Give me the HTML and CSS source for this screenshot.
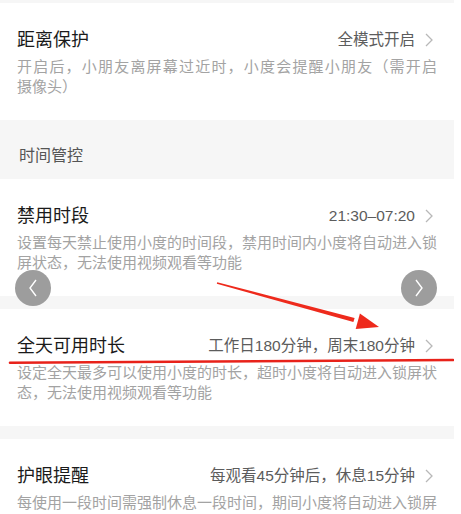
FILE: index.html
```html
<!DOCTYPE html>
<html lang="zh-CN">
<head>
    <meta charset="UTF-8">
    <meta name="viewport" content="width=device-width, initial-scale=1.0">
    <title>设置</title>
    <link rel="stylesheet" href="styles.css">
</head>
<body>
    <div class="page">
        <div class="gap top-gap"></div>

        <div class="card">
            <div class="row">
                <span class="title">距离保护</span>
                <span class="value">全模式开启<svg class="chevron" viewBox="0 0 8 14"><polyline points="1,1 7,7 1,13"/></svg></span>
            </div>
            <p class="desc">开启后，小朋友离屏幕过近时，小度会提醒小朋友（需开启<span class="keep">摄像头）</span></p>
        </div>

        <div class="section-head">时间管控</div>

        <div class="card">
            <div class="row">
                <span class="title">禁用时段</span>
                <span class="value">21:30–07:20<svg class="chevron" viewBox="0 0 8 14"><polyline points="1,1 7,7 1,13"/></svg></span>
            </div>
            <p class="desc">设置每天禁止使用小度的时间段，禁用时间内小度将自动进入锁屏状态，无法使用视频观看等功能</p>
        </div>

        <div class="gap"></div>

        <div class="card">
            <div class="row">
                <span class="title">全天可用时长</span>
                <span class="value">工作日180分钟，周末180分钟<svg class="chevron" viewBox="0 0 8 14"><polyline points="1,1 7,7 1,13"/></svg></span>
            </div>
            <p class="desc">设定全天最多可以使用小度的时长，超时小度将自动进入锁屏状态，无法使用视频观看等功能</p>
        </div>

        <div class="gap"></div>

        <div class="card">
            <div class="row">
                <span class="title">护眼提醒</span>
                <span class="value">每观看45分钟后，休息15分钟<svg class="chevron" viewBox="0 0 8 14"><polyline points="1,1 7,7 1,13"/></svg></span>
            </div>
            <p class="desc">每使用一段时间需强制休息一段时间，期间小度将自动进入锁屏</p>
        </div>

        <!-- carousel paging buttons -->
        <button class="pager pager-prev"><svg viewBox="0 0 10 18"><polyline points="8,1 2,9 8,17"/></svg></button>
        <button class="pager pager-next"><svg viewBox="0 0 10 18"><polyline points="2,1 8,9 2,17"/></svg></button>

        <!-- red markup drawn on top -->
        <svg class="markup" viewBox="0 0 461 514">
            <polygon points="216.8,283.8 217.2,282.2 354.6,317.9 353.4,322.1" />
            <polygon points="379,327 359.9,313.5 355.7,328.9" />
            <line x1="10" y1="362.8" x2="453" y2="360" />
        </svg>
    </div>
</body>
</html>
```

FILE: styles.css
```css
body {
    margin: 0;
    background-color: #ffffff;
    font-family: "Liberation Sans", "Noto Sans CJK SC", sans-serif;
    color: #1c1c1c;
}

.page {
    position: relative;
    width: 454px;
    height: 514px;
    overflow: hidden;
}

.gap {
    height: 13px;
    background-color: #f6f6f6;
}

.top-gap {
    height: 3px;
}

.card {
    background-color: #ffffff;
    padding: 24px 17px 23px 17px;
}

.row {
    display: flex;
    justify-content: space-between;
    align-items: center;
    height: 26px;
}

.title {
    font-size: 18px;
    line-height: 26px;
    color: #1a1a1a;
}

.value {
    display: flex;
    align-items: center;
    font-size: 15.5px;
    line-height: 26px;
    color: #5c5c5c;
}

.chevron {
    width: 8px;
    height: 14px;
    margin-left: 10px;
    margin-right: 4px;
    fill: none;
    stroke: #b8b8b8;
    stroke-width: 1.3;
}

.desc {
    margin: 4px 0 0 0;
    font-size: 15px;
    line-height: 20px;
    color: #a3a3a3;
    text-align: justify;
}

.keep {
    white-space: nowrap;
}

.section-head {
    height: 59px;
    box-sizing: border-box;
    padding: 24px 0 0 19px;
    background-color: #f6f6f6;
    font-size: 16px;
    line-height: 24px;
    color: #555555;
}

.pager {
    position: absolute;
    top: 270px;
    width: 36px;
    height: 36px;
    padding: 0;
    border: none;
    border-radius: 50%;
    background-color: #9d9d9d;
    display: flex;
    justify-content: center;
    align-items: center;
}

.pager svg {
    width: 10px;
    height: 18px;
    fill: none;
    stroke: #ffffff;
    stroke-width: 1.4;
}

.pager-prev {
    left: 15px;
}

.pager-next {
    left: 401px;
}

.markup {
    position: absolute;
    top: 0;
    left: 0;
    width: 461px;
    height: 514px;
    pointer-events: none;
}

.markup polygon {
    fill: #ee2a1c;
}

.markup line {
    stroke: #e8221a;
    stroke-width: 2.6;
    stroke-linecap: round;
}
```
